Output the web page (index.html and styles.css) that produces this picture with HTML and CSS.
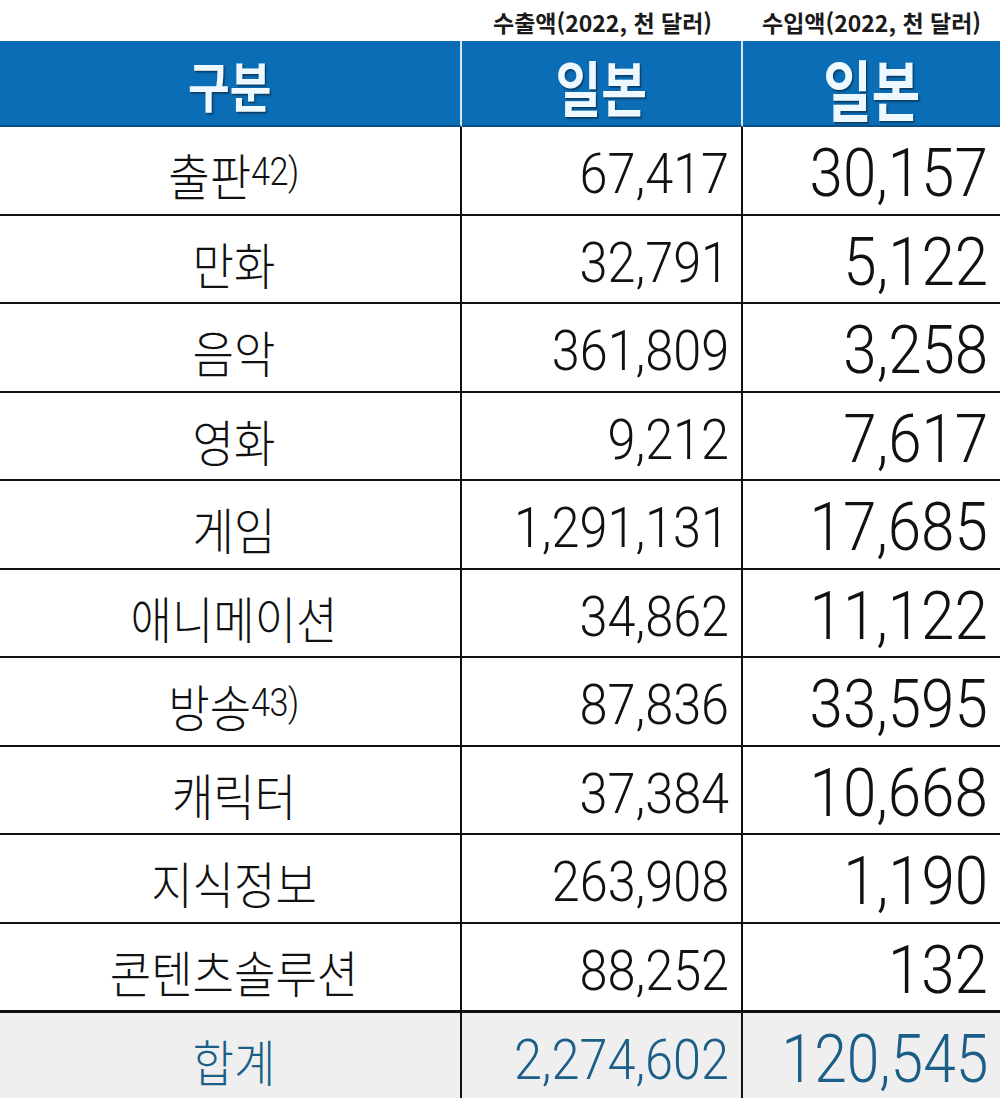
FILE: index.html
```html
<!DOCTYPE html>
<html lang="ko">
<head>
<meta charset="utf-8">
<title>일본 콘텐츠 수출입액</title>
<link rel="stylesheet" href="styles.css">
</head>
<body>
<div class="page">
  <div class="captions">
    <div class="cap-empty"></div>
    <div class="cap">수출액(2022, 천 달러)</div>
    <div class="cap">수입액(2022, 천 달러)</div>
  </div>
  <div class="grid">
    <div class="hd hd-first"><span class="ht ht-sm">구분</span></div>
    <div class="hd hd-mid"><span class="ht ht-md">일본</span></div>
    <div class="hd hd-last"><span class="ht ht-lg">일본</span></div>

    <div class="c name"><span class="kt">출판<span class="sup">42)</span></span></div>
    <div class="c num"><span class="n2">67,417</span></div>
    <div class="c num last"><span class="n3">30,157</span></div>

    <div class="c name"><span class="kt">만화</span></div>
    <div class="c num"><span class="n2">32,791</span></div>
    <div class="c num last"><span class="n3">5,122</span></div>

    <div class="c name"><span class="kt">음악</span></div>
    <div class="c num"><span class="n2">361,809</span></div>
    <div class="c num last"><span class="n3">3,258</span></div>

    <div class="c name"><span class="kt">영화</span></div>
    <div class="c num"><span class="n2">9,212</span></div>
    <div class="c num last"><span class="n3">7,617</span></div>

    <div class="c name"><span class="kt">게임</span></div>
    <div class="c num"><span class="n2">1,291,131</span></div>
    <div class="c num last"><span class="n3">17,685</span></div>

    <div class="c name"><span class="kt">애니메이션</span></div>
    <div class="c num"><span class="n2">34,862</span></div>
    <div class="c num last"><span class="n3">11,122</span></div>

    <div class="c name"><span class="kt">방송<span class="sup">43)</span></span></div>
    <div class="c num"><span class="n2">87,836</span></div>
    <div class="c num last"><span class="n3">33,595</span></div>

    <div class="c name"><span class="kt">캐릭터</span></div>
    <div class="c num"><span class="n2">37,384</span></div>
    <div class="c num last"><span class="n3">10,668</span></div>

    <div class="c name"><span class="kt">지식정보</span></div>
    <div class="c num"><span class="n2">263,908</span></div>
    <div class="c num last"><span class="n3">1,190</span></div>

    <div class="c name"><span class="kt">콘텐츠솔루션</span></div>
    <div class="c num"><span class="n2">88,252</span></div>
    <div class="c num last"><span class="n3">132</span></div>

    <div class="c name total"><span class="kt">합계</span></div>
    <div class="c num total"><span class="n2 tn2">2,274,602</span></div>
    <div class="c num last total"><span class="n3 tn3">120,545</span></div>
  </div>
</div>
</body>
</html>
```

FILE: styles.css
```css
* { box-sizing: border-box; }

html, body {
  margin: 0;
  padding: 0;
  background: #ffffff;
}

.page {
  width: 1000px;
  height: 1098px;
  overflow: hidden;
  font-family: "Noto Sans CJK KR", "Noto Sans", sans-serif;
  color: #111;
}

.captions {
  display: grid;
  grid-template-columns: 462px 281px 1fr;
  height: 41px;
  align-items: center;
}

.cap {
  text-align: center;
  font-weight: 700;
  font-size: 23px;
  color: #1a1a1a;
  letter-spacing: 0;
  padding-top: 2px;
  white-space: nowrap;
}

.grid {
  display: grid;
  grid-template-columns: 462px 281px 1fr;
  grid-template-rows: 86px repeat(10, 88.5px) 86px;
}

.hd {
  background: #0b6db5;
  display: flex;
  align-items: center;
  justify-content: center;
  border-bottom: 2px solid #0a4f86;
}

.hd-first, .hd-mid {
  border-right: 2px solid #d5e6f3;
}

.ht {
  display: inline-block;
  font-weight: 700;
  color: #eef9ff;
  text-shadow: 1px 1px 0 #0a3e66, 2px 2px 2px rgba(0, 0, 0, 0.35);
  line-height: 1;
  white-space: nowrap;
}

.ht-sm { font-size: 54px; padding-top: 4px; transform: scaleX(0.84); }
.ht-md { font-size: 60px; padding-top: 6px; transform: scaleX(0.83); }
.ht-lg { font-size: 66px; padding-top: 8px; transform: scaleX(0.8); }

.c {
  display: flex;
  align-items: center;
  border-bottom: 2px solid #111;
  border-right: 2px solid #111;
  padding-top: 8px;
}

.c.last { border-right: none; }

.name { justify-content: center; }

.num {
  justify-content: flex-end;
  padding-right: 12px;
}

.num.last { padding-right: 12px; }

.kt {
  display: inline-block;
  font-size: 50px;
  font-weight: 300;
  line-height: 1;
  transform: scaleX(0.9);
  white-space: nowrap;
  position: relative;
  left: 4px;
}

.sup {
  font-family: Roboto, "Liberation Sans", sans-serif;
  font-weight: 300;
  font-size: 38px;
  vertical-align: 11px;
  letter-spacing: -0.5px;
}

.n2, .n3 {
  display: inline-block;
  font-family: Roboto, "Liberation Sans", sans-serif;
  font-weight: 300;
  line-height: 1;
  transform-origin: right center;
  white-space: nowrap;
}

.n2 {
  font-size: 56px;
  transform: scaleX(0.9);
}

.n3 {
  font-size: 66px;
  transform: scaleX(0.91);
}

.total {
  background: #efefef;
  border-top: 1px solid #111;
  border-bottom: none;
  color: #1b5f89;
}

.tn2 {
  transform: scaleX(0.9);
}

.tn3 {
  transform: scaleX(0.89);
}
```
